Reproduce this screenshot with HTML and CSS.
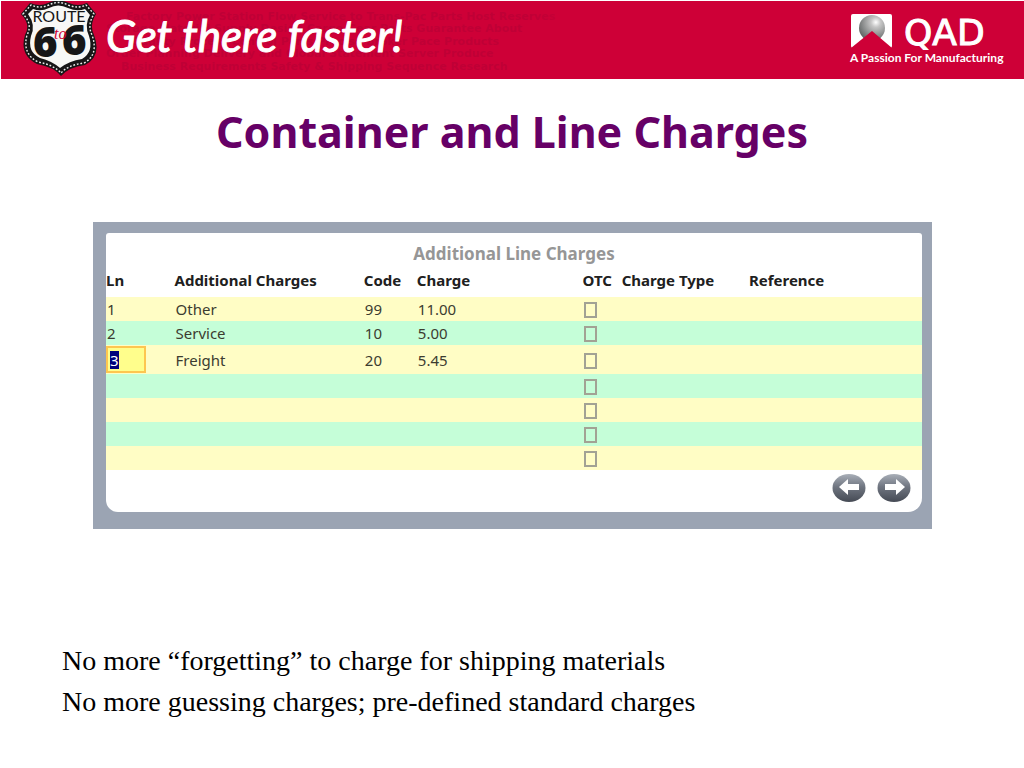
FILE: index.html
```html
<!DOCTYPE html>
<html lang="en">
<head>
<meta charset="utf-8">
<meta name="viewport" content="width=device-width, initial-scale=1">
<title>Container and Line Charges</title>
<link rel="stylesheet" href="styles.css">
</head>
<body>
<header class="banner">
  <svg class="campaign" width="640" height="78" viewBox="0 0 640 78" role="img" aria-label="Route to 66, Get there faster!">
    <defs>
      <linearGradient id="fade" gradientUnits="userSpaceOnUse" x1="100" y1="0" x2="605" y2="0"><stop offset="0" stop-color="#b00034" stop-opacity=".5"/><stop offset=".85" stop-color="#b00034" stop-opacity=".5"/><stop offset="1" stop-color="#b00034" stop-opacity="0"/></linearGradient>
    </defs>
    <g class="pattern" fill="url(#fade)">
      <text x="125" y="19">Factory Power Station Flow Service to Trans-Pac Parts Host Reserves</text>
      <text x="105" y="31">Storage Material Supply Design Cargo Gear Parts Guarantee About</text>
      <text x="130" y="44">Quality Process Control Parts Precise Broker Pace Products</text>
      <text x="105" y="56">Order Planning Delivery and Global Statement Server Produce</text>
      <text x="120" y="69">Business Requirements Safety &amp; Shipping Sequence Research</text>
    </g>
    <path d="M20 13 29 2Q39 6 47 2Q57-3 68 2Q77 6 86 2L95 13Q88 24 93 34Q101 55 84 64Q68 66 60 75Q53 66 36 63Q18 54 24 34Q30 23 20 13Z" fill="#171717"/>
    <path d="M22 13 30 4Q39 8 48 4Q57-1 67 4Q77 8 85 4L93 13Q86 24 91 34Q98 54 83 62Q67 64 60 72Q53 64 37 61Q21 53 26 34Q32 23 22 13Z" fill="none" stroke="#eee" stroke-width="1.4" stroke-dasharray="1.8 1.8"/>
    <path d="M27 13 32 8Q40 11 48 7Q57 2 67 7Q76 11 84 8L89 14Q83 24 88 35Q93 51 81 58Q68 60 59 67Q51 60 39 57Q26 51 30 35Q35 24 27 13Z" fill="#f8f8f5"/>
    <text class="route" x="58" y="21" text-anchor="middle">ROUTE</text>
    <text class="number" x="32" y="56">6</text>
    <text class="number" x="61" y="54">6</text>
    <text class="to" x="53" y="38">to</text>
    <text class="slogan" x="105" y="51">Get there faster!</text>
  </svg>
  <svg class="company" width="160" height="55" viewBox="0 0 160 55" role="img" aria-label="QAD, A Passion For Manufacturing">
    <defs><radialGradient id="ball" cx=".65" cy=".28" r=".75"><stop stop-color="#fff"/><stop offset=".25" stop-color="#c5c5c5"/><stop offset="1" stop-color="#606464"/></radialGradient></defs>
    <rect x="2" y="2" width="41" height="34" rx="2" fill="#fff"/>
    <circle cx="23" cy="16" r="13" fill="url(#ball)"/>
    <path d="M2 36 23 19 43 36Z" fill="#ce0037"/>
    <text class="qad" x="55" y="33">QAD</text>
    <text class="tagline" x="1" y="50">A Passion For Manufacturing</text>
  </svg>
</header>
<main>
  <h1>Container and Line Charges</h1>
  <section class="frame" aria-labelledby="panel-title">
    <div class="panel">
      <h2 id="panel-title">Additional Line Charges</h2>
      <table>
        <colgroup><col class="c-ln"><col class="c-name"><col class="c-code"><col class="c-charge"><col class="c-otc"><col class="c-type"><col></colgroup>
        <thead><tr><th>Ln</th><th>Additional Charges</th><th>Code</th><th>Charge</th><th>OTC</th><th>Charge Type</th><th>Reference</th></tr></thead>
        <tbody>
          <tr><td>1</td><td>Other</td><td>99</td><td>11.00</td><td><input type="checkbox" aria-label="OTC, line 1"></td><td></td><td></td></tr>
          <tr><td>2</td><td>Service</td><td>10</td><td>5.00</td><td><input type="checkbox" aria-label="OTC, line 2"></td><td></td><td></td></tr>
          <tr class="active"><td><label class="line-edit"><span class="selected"><input type="text" value="3" aria-label="Line number"></span></label></td><td>Freight</td><td>20</td><td>5.45</td><td><input type="checkbox" aria-label="OTC, line 3"></td><td></td><td></td></tr>
          <tr><td></td><td></td><td></td><td></td><td><input type="checkbox" aria-label="OTC, line 4"></td><td></td><td></td></tr>
          <tr><td></td><td></td><td></td><td></td><td><input type="checkbox" aria-label="OTC, line 5"></td><td></td><td></td></tr>
          <tr><td></td><td></td><td></td><td></td><td><input type="checkbox" aria-label="OTC, line 6"></td><td></td><td></td></tr>
          <tr><td></td><td></td><td></td><td></td><td><input type="checkbox" aria-label="OTC, line 7"></td><td></td><td></td></tr>
        </tbody>
      </table>
      <nav class="pager" aria-label="Line charges">
        <button type="button" aria-label="Previous"><svg width="34" height="30" viewBox="0 0 34 30"><defs><linearGradient id="steel" x2="0" y2="1"><stop stop-color="#a9afb8"/><stop offset=".45" stop-color="#707681"/><stop offset="1" stop-color="#454a54"/></linearGradient></defs><ellipse cx="17" cy="15" rx="16.500" ry="14" fill="url(#steel)"/><path d="M7 14 16 6V11H27V17H16V22Z" fill="#fff"/></svg></button>
        <button type="button" aria-label="Next"><svg width="34" height="30" viewBox="0 0 34 30"><ellipse cx="17" cy="15" rx="16.500" ry="14" fill="url(#steel)"/><path d="M28 14 19 6V11H8V17H19V22Z" fill="#fff"/></svg></button>
      </nav>
    </div>
  </section>
  <div class="notes">
    <p>No more “forgetting” to charge for shipping materials</p>
    <p>No more guessing charges; pre-defined standard charges</p>
  </div>
</main>
</body>
</html>
```
FILE: styles.css
```css
* { box-sizing: border-box; }
body { margin: 0; background: #fff; color: #000; }
.banner {
  display: flex;
  justify-content: space-between;
  align-items: flex-start;
  margin: 1px 0 0 1px;
  background: #ce0037;
}
.banner svg { display: block; flex: none; }
.company { margin: 11px 15px 0 0; }
.pattern { font: bold 11px "DejaVu Sans", sans-serif; }
.route { font: 16px Lato, sans-serif; fill: #171717; }
.number { font: 900 42px "Noto Sans", sans-serif; fill: #171717; }
.to { font: italic 16px "Liberation Serif", serif; fill: #ce0037; }
.slogan { font: italic 44px Lato, sans-serif; fill: #fff; stroke: #fff; }
.qad { font: 36px "DejaVu Sans", sans-serif; fill: #fff; stroke: #fff; }
.tagline { font: bold 12px Lato, sans-serif; fill: #fff; }
h1 {
  margin: 23px 0 0;
  font: bold 43px/60px "Noto Sans", sans-serif;
  color: #660066;
  text-align: center;
}
.frame {
  margin: 60px 92px 0 93px;
  padding: 11px 10px 17px 13px;
  background: #9ba4b3;
}
.panel {
  padding-top: 8px;
  background: #fff;
  border-radius: 3px 3px 14px 12px;
}
h2 {
  margin: 0;
  font: bold 17px/26px "Noto Sans", sans-serif;
  color: #969696;
  text-align: center;
}
table {
  width: 100%;
  table-layout: fixed;
  border-collapse: collapse;
  font: 15px/20px "Noto Sans", sans-serif;
  color: #3c3c30;
}
.c-ln { width: 8.4%; }
.c-name { width: 23.2%; }
.c-code { width: 6.5%; }
.c-charge { width: 20.3%; }
.c-otc { width: 4.8%; }
.c-type { width: 15.6%; }
th { height: 30px; padding: 0 0 4px; text-align: left; color: #202020; white-space: nowrap; }
td { height: 24px; padding: 0 1px; }
tbody tr:nth-child(odd) { background: #fffdc5; }
tbody tr:nth-child(even) { background: #c5fed8; }
.active td { height: 29px; }
.active td:first-child { padding: 0; }
.line-edit {
  display: flex;
  align-items: center;
  width: 40px;
  height: 27px;
  padding-left: 2px;
  background: #fffe8c;
  border: 2px solid #fdc650;
}
.selected { display: flex; width: 9px; height: 18px; background: #00007c; }
.selected input {
  width: 9px;
  height: 18px;
  padding: 0;
  border: 0;
  background: transparent;
  color: #fff;
  font: 15px/18px "Noto Sans", sans-serif;
}
td > input {
  appearance: none;
  display: block;
  width: 13px;
  height: 16px;
  margin: 2px 0 0;
  border: 2px solid #a2a294;
}
.pager {
  display: flex;
  justify-content: flex-end;
  gap: 11px;
  padding: 3px 11px 9px 0;
}
.pager button { padding: 0; border: 0; background: transparent; }
.pager svg { display: block; }
.notes {
  margin: 111px 62px 0;
  font: 28px/41px "Liberation Serif", serif;
}
.notes p { margin: 0; }
```
